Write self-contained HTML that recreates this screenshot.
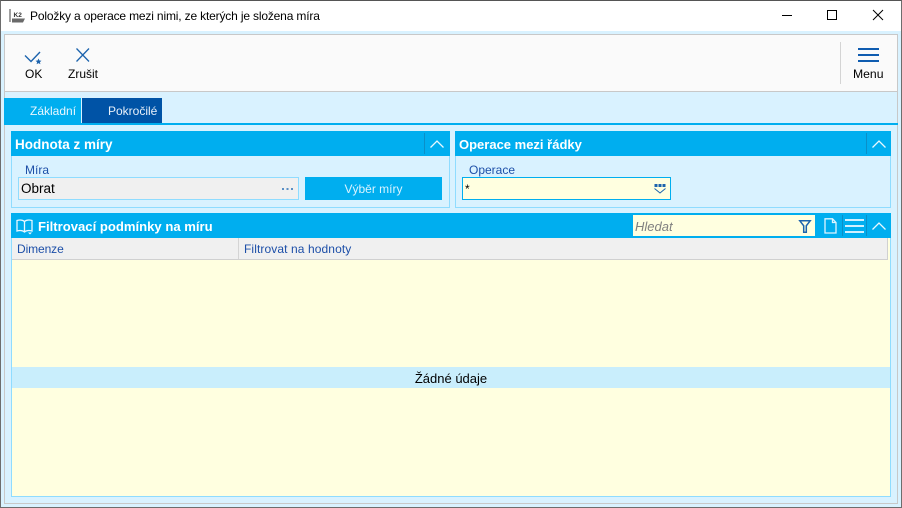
<!DOCTYPE html>
<html lang="cs"><head><meta charset="utf-8"><title>Položky a operace</title>
<style>
html,body{margin:0;padding:0;width:902px;height:508px;overflow:hidden;background:#d9f2ff;font-family:"Liberation Sans",sans-serif;font-size:12px;color:#000}
.a{position:absolute;box-sizing:border-box;white-space:nowrap}
svg{position:absolute;overflow:visible}
.b{font-weight:bold;color:#fff;font-size:13.5px;line-height:27px}
.l{color:#1d4fa8;font-size:12px;line-height:14px}
</style></head><body>
<div class="a" style="left:0;top:0;width:902px;height:508px;border:1px solid #6d6d6d;border-top-color:#555"></div>
<div class="a" style="left:1px;top:1px;width:900px;height:30px;background:#fff"></div>
<svg style="left:9px;top:8px" width="18" height="16" viewBox="0 0 18 16"><path d="M1 1v13" fill="none" stroke="#888" stroke-width="1.600"/><path d="M3 10.500h13l-2 4H3z" fill="#6a6a6a"/><text x="4.500" y="9" font-family="Liberation Sans" font-size="6.500" font-weight="bold" fill="#333">K2</text></svg>
<div class="a" style="left:30px;top:8px;font-size:12px;line-height:16px;color:#000;letter-spacing:-.165px">Položky a operace mezi nimi, ze kterých je složena míra</div>
<svg style="left:782px;top:10px" width="110" height="12" viewBox="0 0 110 12"><path d="M0 5.500h10" stroke="#000" fill="none"/><rect x="45.500" y=".5" width="9" height="9" fill="none" stroke="#000"/><path d="M91 0l10 10M101 0L91 10" stroke="#000" fill="none"/></svg>

<div class="a" style="left:4px;top:92px;width:894px;height:412px;border:1px solid #c8c8c8;border-top:0"></div>
<div class="a" style="left:4px;top:34px;width:894px;height:58px;background:#fafafa;border:1px solid #c8c8c8"></div>
<svg style="left:25px;top:49px" width="18" height="16" viewBox="0 0 18 16"><path d="M0 6.500l6 6L15 3" fill="none" stroke="#1c63ad" stroke-width="1.400"/><path d="M13.500 9.500l.9 2 2.100.2-1.600 1.400.5 2.100-1.900-1.100-1.900 1.100.5-2.100-1.600-1.400 2.100-.2z" fill="#1c63ad"/></svg>
<div class="a" style="left:25px;top:67px;font-size:12px;line-height:15px">OK</div>
<svg style="left:76px;top:48px" width="14" height="14" viewBox="0 0 14 14"><path d="M.5.500l12.500 13M13 .5L.5 13.500" fill="none" stroke="#1c63ad" stroke-width="1.300"/></svg>
<div class="a" style="left:68px;top:67px;font-size:12px;line-height:15px">Zrušit</div>
<div class="a" style="left:840px;top:42px;width:1px;height:42px;background:#d4d4d4"></div>
<div class="a" style="left:858px;top:48px;width:21px;height:2px;background:#0f5cb0"></div>
<div class="a" style="left:858px;top:54px;width:21px;height:2px;background:#0f5cb0"></div>
<div class="a" style="left:858px;top:60px;width:21px;height:2px;background:#0f5cb0"></div>
<div class="a" style="left:853px;top:67px;font-size:12.200px;line-height:15px">Menu</div>

<div class="a" style="left:4px;top:98px;width:77px;height:25px;background:#00aeef;color:#e8f7ff;line-height:26px;padding-left:26px">Základní</div>
<div class="a" style="left:82px;top:98px;width:80px;height:25px;background:#0053a6;color:#e8f0fa;line-height:26px;padding-left:26px">Pokročilé</div>
<div class="a" style="left:4px;top:123px;width:894px;height:2px;background:#00aeef"></div>

<div class="a" style="left:11px;top:131px;width:439px;height:77px;border:1px solid #8fdcff"></div>
<div class="a b" style="left:11px;top:131px;width:439px;height:25px;background:#00aeef;padding-left:4px">Hodnota z míry</div>
<div class="a" style="left:424px;top:133px;width:1px;height:21px;background:#0a8fc8"></div>
<svg style="left:430px;top:140px" width="14" height="8" viewBox="0 0 14 8"><path d="M.5 7.500L7 1l6.500 6.500" fill="none" stroke="#e8f8ff" stroke-width="1.300"/></svg>
<div class="a l" style="left:25px;top:163px">Míra</div>
<div class="a" style="left:18px;top:177px;width:281px;height:23px;background:#f0f0f0;border:1px solid #8fdcff;padding-left:2px;line-height:22px;font-size:13.500px">Obrat</div>
<div class="a" style="left:282px;top:188px;width:2px;height:2px;background:#5a8fc5;box-shadow:4.500px 0 #5a8fc5,9px 0 #5a8fc5"></div>
<div class="a" style="left:305px;top:177px;width:137px;height:23px;background:#00aeef;color:#d8f3ff;text-align:center;line-height:24px;font-size:12px">Výběr míry</div>

<div class="a" style="left:455px;top:131px;width:436px;height:77px;border:1px solid #8fdcff"></div>
<div class="a b" style="left:455px;top:131px;width:436px;height:25px;background:#00aeef;padding-left:4px;font-size:13px">Operace mezi řádky</div>
<div class="a" style="left:866px;top:133px;width:1px;height:21px;background:#0a8fc8"></div>
<svg style="left:872px;top:140px" width="14" height="8" viewBox="0 0 14 8"><path d="M.5 7.500L7 1l6.500 6.500" fill="none" stroke="#e8f8ff" stroke-width="1.300"/></svg>
<div class="a l" style="left:469px;top:163px">Operace</div>
<div class="a" style="left:462px;top:177px;width:209px;height:23px;background:#ffffe0;border:1px solid #00aeef;padding-left:2px;line-height:22px;font-size:12px">*</div>
<svg style="left:654px;top:184px" width="12" height="10" viewBox="0 0 12 10"><path d="M.5 0h3v3h-3zM4.500 0h3v3h-3zM8.500 0h3v3h-3z" fill="#1c63ad"/><path d="M.5 4.500L6 9l5.500-4.500" fill="none" stroke="#1c63ad"/></svg>

<div class="a" style="left:11px;top:213px;width:880px;height:284px;background:#ffffe0;border:1px solid #8fdcff"></div>
<div class="a b" style="left:11px;top:213px;width:880px;height:25px;background:#00aeef;padding-left:27px;font-size:13.100px">Filtrovací podmínky na míru</div>
<svg style="left:16px;top:219px" width="17" height="16" viewBox="0 0 17 16"><path d="M8.500 2.500C6.500.8 3.500.8 1 1.500v10.500c2.500-.7 5.500-.7 7.500 1 2-1.700 5-1.700 7.500-1V1.500C13.500.8 10.500.8 8.500 2.500zM8.500 2.500V13" fill="none" stroke="#eaf8ff" stroke-width="1.300"/><path d="M12 13.500h4l-2 2z" fill="#eaf8ff"/></svg>
<div class="a" style="left:633px;top:215px;width:182px;height:21px;background:#ffffe0;color:#808080;font-style:italic;line-height:23px;padding-left:2px;font-size:13px">Hledat</div>
<svg style="left:799px;top:220px" width="12" height="13" viewBox="0 0 12 13"><path d="M.8 .8h10.400L7.300 5.800v6.400H4.700V5.800z" fill="none" stroke="#1c63ad" stroke-width="1.500"/></svg>
<svg style="left:824px;top:218px" width="13" height="16" viewBox="0 0 13 16"><path d="M1 .8h7.500l3.500 3.700v10.500H1zM8.500 .8v3.700H12" fill="none" stroke="#dff5ff" stroke-width="1.300"/></svg>
<div class="a" style="left:842px;top:215px;width:1px;height:21px;background:#0a8fc8"></div>
<div class="a" style="left:845px;top:219px;width:19px;height:2px;background:#d0f0ff"></div>
<div class="a" style="left:845px;top:225px;width:19px;height:2px;background:#d0f0ff"></div>
<div class="a" style="left:845px;top:231px;width:19px;height:2px;background:#d0f0ff"></div>
<div class="a" style="left:866px;top:215px;width:1px;height:21px;background:#0a8fc8"></div>
<svg style="left:872px;top:222px" width="14" height="8" viewBox="0 0 14 8"><path d="M.5 7.500L7 1l6.500 6.500" fill="none" stroke="#e8f8ff" stroke-width="1.300"/></svg>

<div class="a" style="left:12px;top:238px;width:876px;height:22px;background:#f0f0f0;border-right:1px solid #d0d0d0;border-bottom:1px solid #d0d0d0"></div>
<div class="a" style="left:238px;top:238px;width:1px;height:21px;background:#d4d4d4"></div>
<div class="a l" style="left:17px;top:242px;letter-spacing:-.1px">Dimenze</div>
<div class="a l" style="left:244px;top:242px;letter-spacing:.1px">Filtrovat na hodnoty</div>
<div class="a" style="left:12px;top:367px;width:878px;height:21px;background:#c9eefc;text-align:center;line-height:24px;font-size:13px">Žádné údaje</div>
</body></html>
